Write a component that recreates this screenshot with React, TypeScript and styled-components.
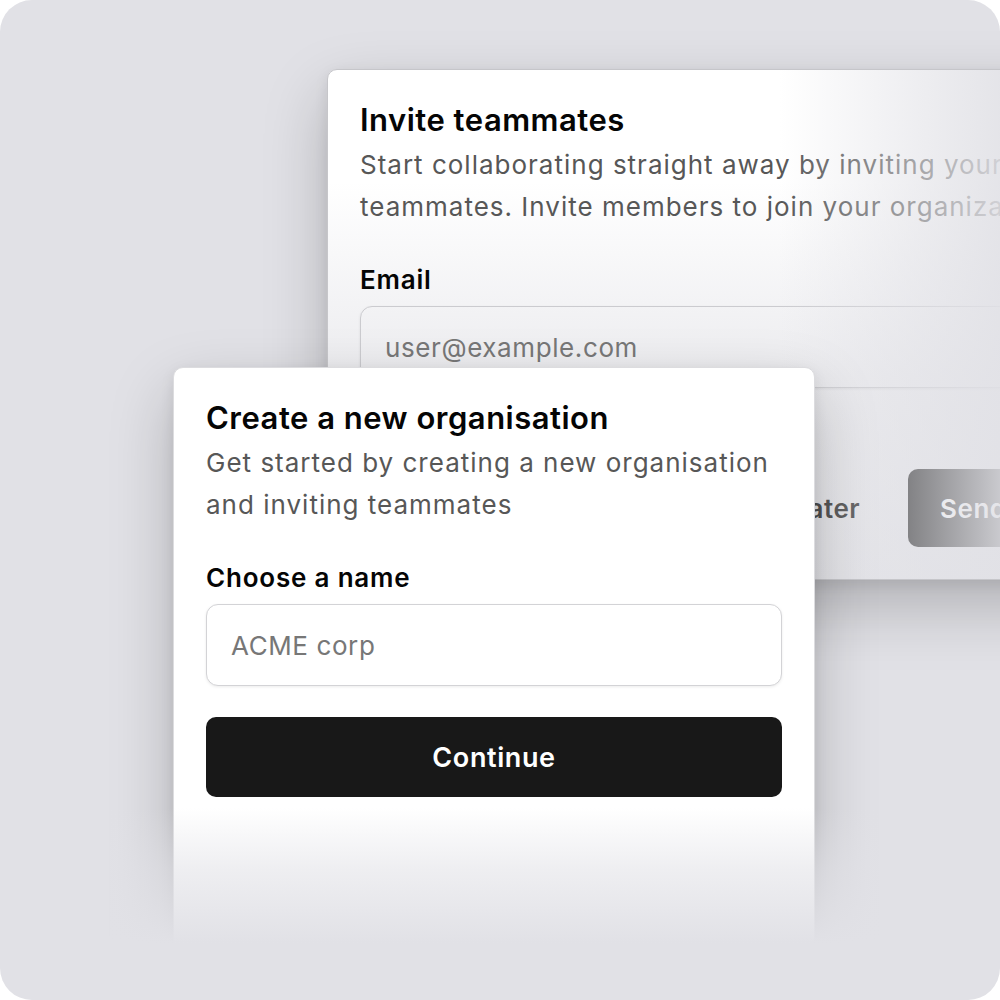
import styled, { createGlobalStyle } from 'styled-components';

const BG = '#e1e1e6';

const GlobalStyle = createGlobalStyle`
  html, body {
    margin: 0;
    padding: 0;
    background: #fff;
  }
  * {
    box-sizing: border-box;
  }
  body {
    font-family: Inter, 'Noto Sans', 'Liberation Sans', sans-serif;
  }
`;

const Frame = styled.div`
  position: relative;
  width: 1000px;
  height: 1000px;
  border-radius: 32px;
  background: ${BG};
  overflow: hidden;
`;

const Card = styled.div<{ $left: number; $top: number; $width: number; $back?: boolean }>`
  position: absolute;
  left: ${(p) => p.$left}px;
  top: ${(p) => p.$top}px;
  width: ${(p) => p.$width}px;
  padding: 32px 32px ${(p) => (p.$back ? 32 : 150)}px;
  border-radius: 10px;
  border: 1px solid ${(p) => (p.$back ? '#c6c6ca' : '#dcdcdf')};
  background: ${(p) =>
    p.$back
      ? 'linear-gradient(to bottom, #fff 0%, #fff 22%, #ececef 60%, #e5e5e9 100%)'
      : '#fff'};
  box-shadow:
    0 26px 64px rgba(0, 0, 0, 0.22),
    0 4px 14px rgba(0, 0, 0, 0.08);
`;

// the back card fades into the backdrop toward its right edge
const SideFade = styled.div`
  position: absolute;
  inset: 0;
  border-radius: 10px;
  pointer-events: none;
  background: linear-gradient(
    to right,
    rgba(225, 225, 230, 0) 54%,
    rgba(225, 225, 230, 0.55) 70%,
    rgba(225, 225, 230, 0.9) 81%
  );
`;

// the front card dissolves into the backdrop at the bottom
const BottomFade = styled.div`
  position: absolute;
  left: 110px;
  top: 808px;
  width: 780px;
  height: 192px;
  pointer-events: none;
  background: linear-gradient(
    to bottom,
    rgba(225, 225, 230, 0) 0px,
    rgba(225, 225, 230, 0.55) 60px,
    ${BG} 135px
  );
`;

const Title = styled.h2`
  margin: 0 0 6px;
  font-size: 31px;
  line-height: 36px;
  font-weight: 600;
  letter-spacing: 0.5px;
  color: #050505;
  white-space: nowrap;
`;

const Description = styled.p`
  margin: 0;
  font-size: 26px;
  line-height: 42px;
  font-weight: 400;
  letter-spacing: 1px;
  color: #575757;
  white-space: pre-line;
`;

const Label = styled.label`
  display: block;
  margin-top: 36px;
  font-size: 26px;
  line-height: 32px;
  font-weight: 600;
  letter-spacing: 0.8px;
  color: #050505;
`;

const Input = styled.input<{ $back?: boolean }>`
  display: block;
  width: 100%;
  height: 82px;
  margin-top: 10px;
  padding: 0 24px;
  border: 1.5px solid ${(p) => (p.$back ? '#cbcbcf' : '#d3d3d6')};
  border-radius: 12px;
  background: ${(p) => (p.$back ? 'transparent' : '#fff')};
  box-shadow: 0 1px 3px rgba(0, 0, 0, 0.08);
  font-family: inherit;
  font-size: 26px;
  letter-spacing: 0.6px;
  color: #222;
  outline: none;
  &::placeholder {
    color: #777;
  }
`;

const PrimaryButton = styled.button`
  display: block;
  width: 100%;
  height: 80px;
  margin-top: 31px;
  border: none;
  border-radius: 10px;
  background: #181818;
  color: #fff;
  font-family: inherit;
  font-size: 27px;
  font-weight: 600;
  letter-spacing: 0.6px;
`;

const Footer = styled.div`
  display: flex;
  justify-content: flex-end;
  align-items: center;
  gap: 24px;
  margin-top: 81px;
`;

const GhostButton = styled.button`
  height: 78px;
  padding: 0 24px;
  border: none;
  background: none;
  color: #333;
  font-family: inherit;
  font-size: 26px;
  font-weight: 600;
  letter-spacing: 0.5px;
  white-space: nowrap;
`;

const SendButton = styled.button`
  height: 78px;
  padding: 0 32px;
  border: none;
  border-radius: 10px;
  background: #181818;
  color: #fff;
  font-family: inherit;
  font-size: 26px;
  font-weight: 600;
  letter-spacing: 0.5px;
  white-space: nowrap;
`;

export default function App() {
  return (
    <>
      <GlobalStyle />
      <Frame>
        <Card $left={327} $top={69} $width={838} $back>
          <Title>Invite teammates</Title>
          <Description>
            {'Start collaborating straight away by inviting your\nteammates. Invite members to join your organization.'}
          </Description>
          <Label>Email</Label>
          <Input $back placeholder="user@example.com" />
          <Footer>
            <GhostButton>Do this later</GhostButton>
            <SendButton>Send invites</SendButton>
          </Footer>
          <SideFade />
        </Card>

        <Card $left={173} $top={367} $width={642}>
          <Title>Create a new organisation</Title>
          <Description>
            Get started by creating a new organisation and inviting teammates
          </Description>
          <Label>Choose a name</Label>
          <Input placeholder="ACME corp" />
          <PrimaryButton>Continue</PrimaryButton>
        </Card>

        <BottomFade />
      </Frame>
    </>
  );
}
